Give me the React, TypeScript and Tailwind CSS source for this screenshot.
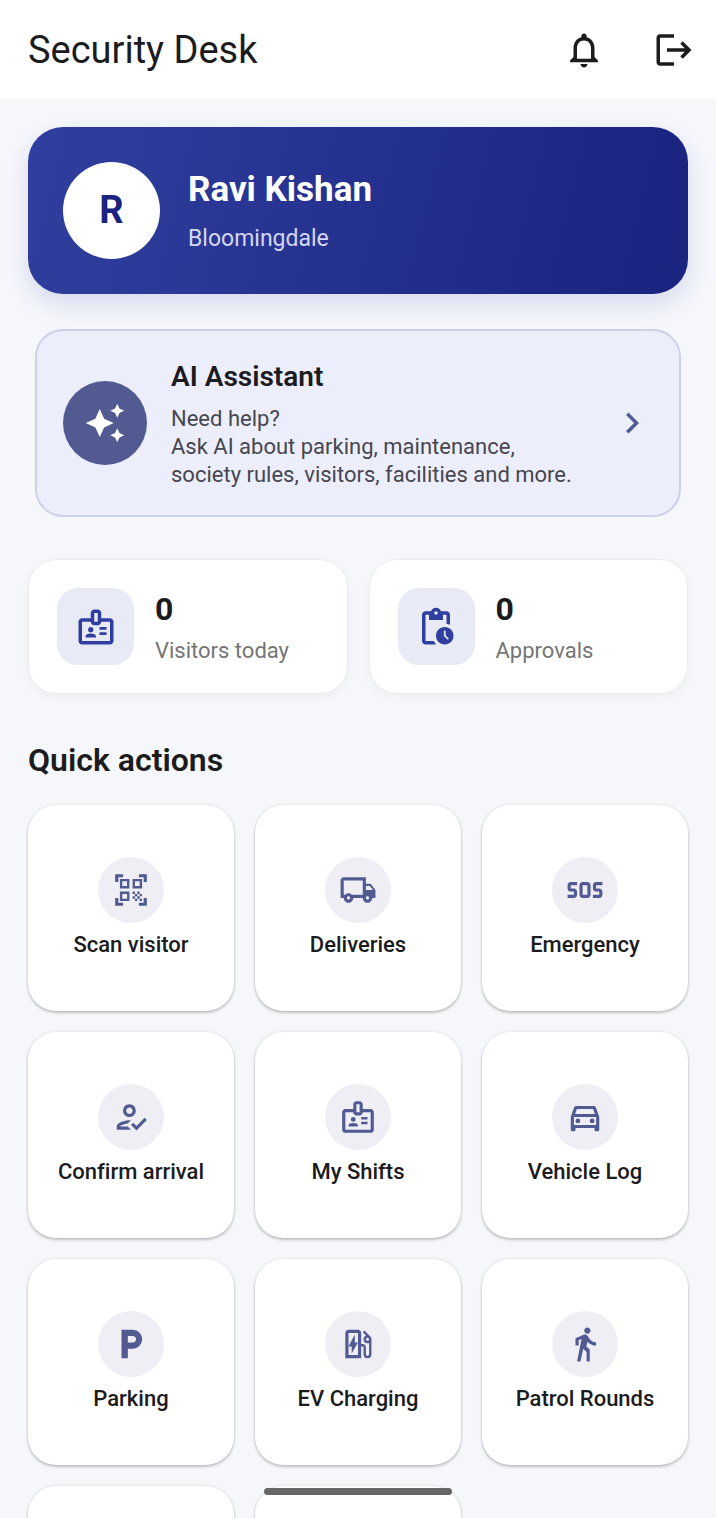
import type { IconType } from "react-icons";
import {
  MdAutoAwesome,
  MdChevronRight,
  MdDirectionsWalk,
  MdLocalParking,
  MdLogout,
  MdNotificationsNone,
  MdOutlineBadge,
  MdOutlineDirectionsCar,
  MdOutlineEvStation,
  MdOutlineHowToReg,
  MdOutlineLocalShipping,
  MdPendingActions,
  MdQrCodeScanner,
  MdSos,
} from "react-icons/md";

type Entry = { label: string; icon: IconType };

const stats: (Entry & { value: number })[] = [
  { label: "Visitors today", value: 0, icon: MdOutlineBadge },
  { label: "Approvals", value: 0, icon: MdPendingActions },
];

const actions: Entry[] = [
  { label: "Scan visitor", icon: MdQrCodeScanner },
  { label: "Deliveries", icon: MdOutlineLocalShipping },
  { label: "Emergency", icon: MdSos },
  { label: "Confirm arrival", icon: MdOutlineHowToReg },
  { label: "My Shifts", icon: MdOutlineBadge },
  { label: "Vehicle Log", icon: MdOutlineDirectionsCar },
  { label: "Parking", icon: MdLocalParking },
  { label: "EV Charging", icon: MdOutlineEvStation },
  { label: "Patrol Rounds", icon: MdDirectionsWalk },
];

const tileClass =
  "flex aspect-square flex-col items-center justify-center gap-2 rounded-[28px] bg-white shadow-[0_2px_3px_rgba(0,0,0,0.2),0_0_3px_rgba(0,0,0,0.12)]";

function Header() {
  return (
    <header className="flex shrink-0 items-center justify-between bg-white py-2 pl-7 text-[#1c1c1e]">
      <h1 className="text-[38px] leading-[48px]">Security Desk</h1>
      <div className="flex gap-1.5">
        <button type="button" aria-label="Notifications" className="flex h-[83px] w-[84px] items-center justify-center">
          <MdNotificationsNone size={42} />
        </button>
        <button type="button" aria-label="Log out" className="flex h-[83px] w-[84px] items-center justify-center">
          <MdLogout size={42} />
        </button>
      </div>
    </header>
  );
}

function ProfileCard() {
  return (
    <section className="flex items-center gap-7 rounded-[35px] bg-linear-[104deg] from-[#303f9f] to-[#1a237e] p-[35px] shadow-[0_10px_24px_rgba(48,63,159,0.15)]">
      <div className="flex size-[97px] shrink-0 items-center justify-center rounded-full bg-white text-[38px] font-bold text-[#1a237e]">
        R
      </div>
      <div className="flex flex-col gap-3.5">
        <h2 className="text-[35px] leading-[42px] font-bold text-white">Ravi Kishan</h2>
        <p className="text-[23px] leading-7 text-[#d3d7f2]">Bloomingdale</p>
      </div>
    </section>
  );
}

function AssistantCard() {
  return (
    <button
      type="button"
      className="mx-[7px] mt-[35px] flex items-center gap-6 rounded-[28px] border-2 border-[#cdd1e7] bg-[#edeefc] p-[26px] text-left"
    >
      <span className="flex size-[84px] shrink-0 items-center justify-center rounded-full bg-[#515b92] text-white">
        <MdAutoAwesome size={42} />
      </span>
      <span className="flex flex-1 flex-col gap-2">
        <span className="text-[28px] leading-10 font-semibold text-[#1b1b21]">AI Assistant</span>
        <span className="text-[22px] leading-7 text-[#46464f]">
          Need help?
          <br />
          Ask AI about parking, maintenance,
          <br />
          society rules, visitors, facilities and more.
        </span>
      </span>
      <MdChevronRight size={42} className="shrink-0 text-[#515b92]" />
    </button>
  );
}

function StatCard({ label, value, icon: Icon }: Entry & { value: number }) {
  return (
    <div className="flex items-center gap-[21px] rounded-[28px] border border-[#ebebee] bg-white p-7 shadow-[0_4px_12px_rgba(0,0,0,0.03)]">
      <div className="flex size-[77px] shrink-0 items-center justify-center rounded-[21px] bg-[#e8eaf6] text-[#303f9f]">
        <Icon size={42} />
      </div>
      <div className="flex flex-col gap-2">
        <span className="text-[32px] leading-10 font-bold text-[#1c1c1e]">{value}</span>
        <span className="text-[22px] leading-7 text-[#757575]">{label}</span>
      </div>
    </div>
  );
}

function ActionTile({ label, icon: Icon }: Entry) {
  return (
    <button type="button" className={tileClass}>
      <span className="flex size-[66px] items-center justify-center rounded-full bg-[#eeeef4] text-[#515b92]">
        <Icon size={38} />
      </span>
      <span className="text-[22px] leading-7 font-medium text-[#1c1c1e]">{label}</span>
    </button>
  );
}

export default function App() {
  return (
    <div className="flex h-screen flex-col bg-[#f5f7fb] font-['Roboto',sans-serif] [font-variant-ligatures:none]">
      <Header />
      <main className="flex min-h-0 flex-1 flex-col overflow-y-auto px-7 py-7 [scrollbar-width:none]">
        <ProfileCard />
        <AssistantCard />
        <section className="mt-[42px] grid grid-cols-2 gap-[21px]">
          {stats.map((stat) => (
            <StatCard key={stat.label} {...stat} />
          ))}
        </section>
        <h2 className="mt-[45px] text-[32px] leading-[42px] font-semibold text-[#1c1c1e]">Quick actions</h2>
        <section className="mt-6 grid grid-cols-3 gap-[21px]">
          {actions.map((action) => (
            <ActionTile key={action.label} {...action} />
          ))}
          <div className={tileClass} />
          <div className={tileClass} />
        </section>
      </main>
      <div className="fixed inset-x-0 bottom-[23px] mx-auto h-[7px] w-[188px] rounded-full bg-[#666666]" />
    </div>
  );
}
